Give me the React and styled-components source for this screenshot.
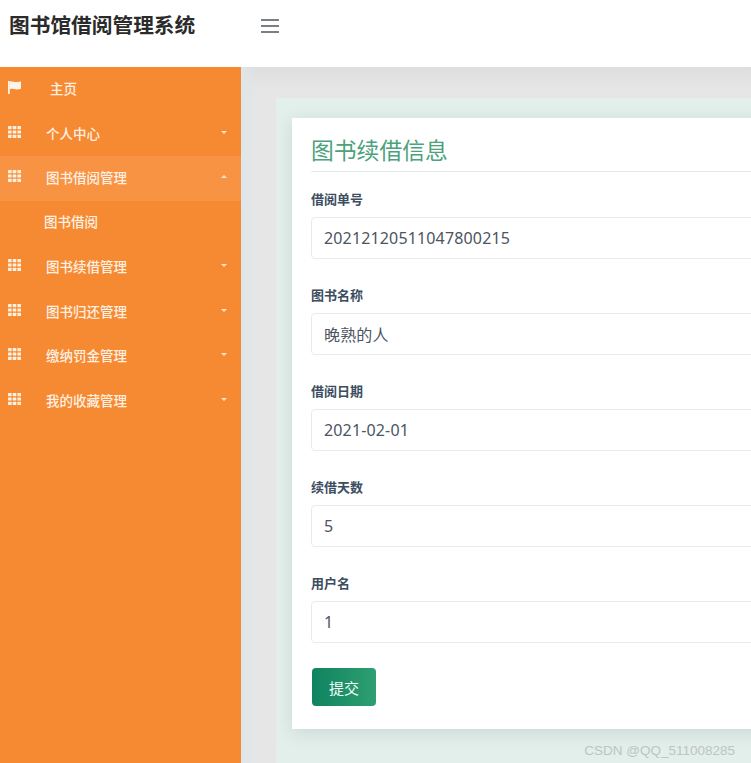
import React from 'react'
import styled, { createGlobalStyle } from 'styled-components'

const FONT = `"Noto Sans", "Noto Sans CJK SC", sans-serif`

const GlobalStyle = createGlobalStyle`
    html, body {
        margin: 0;
        padding: 0;
        height: 100%;
        overflow: hidden;
        font-family: ${FONT};
    }
    * {
        box-sizing: border-box;
    }
`

const menus = [
    { title: "主页", icon: "flag", home: true },
    { title: "个人中心", arrow: "down" },
    { title: "图书借阅管理", arrow: "up", active: true },
    { title: "图书借阅", sub: true },
    { title: "图书续借管理", arrow: "down" },
    { title: "图书归还管理", arrow: "down" },
    { title: "缴纳罚金管理", arrow: "down" },
    { title: "我的收藏管理", arrow: "down" },
]

const fields = [
    { label: "借阅单号", value: "20212120511047800215" },
    { label: "图书名称", value: "晚熟的人" },
    { label: "借阅日期", value: "2021-02-01" },
    { label: "续借天数", value: "5" },
    { label: "用户名", value: "1" },
]

function FlagIcon() {
    return (
        <svg width="13" height="13" viewBox="0 0 13 13">
            <path d="M0 0h1.800v13H0z" fill="#fff4ea" />
            <path d="M1.800 .6c3-.8 4.600 1 7.800.3l3.400-.5v7.400c-3 1.200-5.400.6-7.200.2-1.500-.3-2.800-.2-4 .2z" fill="#fff4ea" />
        </svg>
    )
}

function GridIcon() {
    return (
        <svg width="13" height="12" viewBox="0 0 13 12" fill="#fff0e0">
            <rect x="0" y="0" width="3.600" height="3.200" rx="0.500" />
            <rect x="4.700" y="0" width="3.600" height="3.200" rx="0.500" />
            <rect x="9.400" y="0" width="3.600" height="3.200" rx="0.500" />
            <rect x="0" y="4.400" width="3.600" height="3.200" rx="0.500" />
            <rect x="4.700" y="4.400" width="3.600" height="3.200" rx="0.500" />
            <rect x="9.400" y="4.400" width="3.600" height="3.200" rx="0.500" />
            <rect x="0" y="8.800" width="3.600" height="3.200" rx="0.500" />
            <rect x="4.700" y="8.800" width="3.600" height="3.200" rx="0.500" />
            <rect x="9.400" y="8.800" width="3.600" height="3.200" rx="0.500" />
        </svg>
    )
}

function App() {
    return (
        <Page>
            <GlobalStyle />
            <Header>
                <Logo>图书馆借阅管理系统</Logo>
                <Burger>
                    <span />
                    <span />
                    <span />
                </Burger>
            </Header>
            <Body>
                <Sidebar>
                    {menus.map((item, index) => (
                        <MenuRow key={index} $active={item.active}>
                            {!item.sub && (
                                <MenuIcon>
                                    {item.icon === "flag" ? <FlagIcon /> : <GridIcon />}
                                </MenuIcon>
                            )}
                            <MenuText $home={item.home} $sub={item.sub}>{item.title}</MenuText>
                            {item.arrow && <Caret $up={item.arrow === "up"} />}
                        </MenuRow>
                    ))}
                </Sidebar>
                <Main>
                    <Panel>
                        <Card>
                            <Title>图书续借信息</Title>
                            {fields.map((item) => (
                                <Field key={item.label}>
                                    <Label>{item.label}</Label>
                                    <Input readOnly value={item.value} />
                                </Field>
                            ))}
                            <Submit type="button">提交</Submit>
                        </Card>
                    </Panel>
                    <Watermark>CSDN @QQ_511008285</Watermark>
                </Main>
            </Body>
        </Page>
    )
}

export default App

const Page = styled.div`
    width: 751px;
    height: 763px;
    display: flex;
    flex-direction: column;
    overflow: hidden;
    background: #fff;
`
const Header = styled.div`
    flex: 0 0 67px;
    display: flex;
    align-items: flex-start;
    padding: 12px 0 0 9px;
    background: #fff;
`
const Logo = styled.div`
    width: 252px;
    font-size: 20.700px;
    line-height: 26px;
    font-weight: 700;
    color: #2b2b2b;
    white-space: nowrap;
`
const Burger = styled.div`
    display: flex;
    flex-direction: column;
    gap: 4px;
    width: 18px;
    margin-top: 7px;
    span {
        display: block;
        height: 2px;
        background: #7b7f83;
    }
`
const Body = styled.div`
    flex: 1;
    display: flex;
    min-height: 0;
`
const Sidebar = styled.div`
    flex: 0 0 241px;
    background: #f68a32;
`
const MenuRow = styled.div`
    position: relative;
    display: flex;
    align-items: center;
    height: 44.5px;
    padding-left: 8px;
    background: ${(props) => (props.$active ? "#f79342" : "transparent")};
`
const MenuIcon = styled.div`
    display: flex;
    width: 14px;
    margin-top: -4px;
`
const MenuText = styled.span`
    margin-left: ${(props) => (props.$home ? "28px" : props.$sub ? "36px" : "24px")};
    margin-top: ${(props) => (props.$sub ? "-4px" : "-2px")};
    font-size: 13.500px;
    font-weight: 500;
    color: #fff0e2;
`
const Caret = styled.i`
    position: absolute;
    right: 14px;
    top: 19px;
    width: 0;
    height: 0;
    border-left: 3.500px solid transparent;
    border-right: 3.500px solid transparent;
    border-top: ${(props) => (props.$up ? "0" : "3.500px solid #fbe3cf")};
    border-bottom: ${(props) => (props.$up ? "3.500px solid #fbe3cf" : "0")};
`
const Main = styled.div`
    position: relative;
    flex: 1;
    min-width: 0;
    padding: 31px 0 0 35px;
    overflow: hidden;
    background: linear-gradient(180deg, #dedede 0, #e6e6e6 24px, #e6e6e6 100%);
    box-shadow: inset 14px 0 10px -6px #dfe5ea;
`
const Panel = styled.div`
    width: 900px;
    height: 760px;
    padding: 20px 0 0 16px;
    background: #e3efea;
`
const Card = styled.div`
    height: 611px;
    padding: 14px 20px 0 19px;
    background: #fff;
    box-shadow: 0 4px 16px rgba(120, 140, 160, 0.22);
`
const Title = styled.div`
    height: 40px;
    margin-bottom: 15px;
    border-bottom: 1px solid #e6e9ec;
    font-size: 22.800px;
    line-height: 38px;
    color: #4ba27b;
`
const Field = styled.div`
    height: 96px;
`
const Label = styled.div`
    height: 30px;
    font-size: 13px;
    line-height: 24px;
    font-weight: 700;
    color: #3c4d5e;
`
const Input = styled.input`
    display: block;
    width: 100%;
    height: 42px;
    padding: 0 12px;
    border: 1px solid #e8ebee;
    border-radius: 4px;
    outline: none;
    background: #fff;
    font-family: ${FONT};
    font-size: 16px;
    letter-spacing: 0.15px;
    color: #4c5561;
`
const Submit = styled.button`
    display: block;
    width: 64px;
    height: 38px;
    margin: 1px 0 0 1px;
    padding: 0;
    border: none;
    border-radius: 4px;
    background: linear-gradient(90deg, #0f8360, #2f9f72);
    font-family: ${FONT};
    font-size: 15px;
    color: #f2fff9;
`
const Watermark = styled.div`
    position: absolute;
    right: 16px;
    bottom: 5px;
    font-family: "Liberation Sans", sans-serif;
    font-size: 13.500px;
    color: #bcc5c3;
    white-space: nowrap;
`
